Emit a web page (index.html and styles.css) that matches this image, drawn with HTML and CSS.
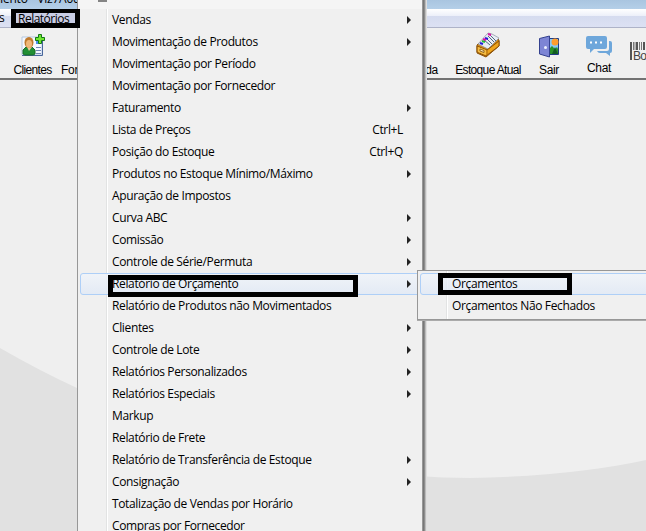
FILE: index.html
```html
<!DOCTYPE html>
<html lang="pt-BR">
<head>
    <meta charset="UTF-8">
    <meta name="viewport" content="width=device-width, initial-scale=1.0">
    <title>Relatórios</title>
    <link rel="stylesheet" href="styles.css">
</head>
<body>
    <div class="window">
        <div class="titlebar"><span>mento - Viz7A000</span></div>
        <nav class="menubar">
            <span class="menubar-prev">s</span>
            <span class="menubar-item">Relatórios</span>
        </nav>

        <div class="toolbar">
            <div class="tool clientes">
                <svg width="24" height="24" viewBox="0 0 24 24">
                    <path d="M1 3h20v18H1z" fill="#f4f8ff" stroke="#b5c7df"/>
                    <path d="M21.5 4v17.5H1" fill="none" stroke="#48669b"/>
                    <path d="M15 13.500h5M15 16.500h5M15 19.500h5" stroke="#7186b4"/>
                    <path d="M15 6h4v4h-4z" fill="#4b91ed"/>
                    <path d="M2 20v-4l3-3h6l3 3v4l-2 1H4z" fill="#218f34" stroke="#176a29"/>
                    <path d="M6 13l2 4 3-4z" fill="#eac69b"/>
                    <ellipse cx="8" cy="8.500" rx="4.500" ry="5.500" fill="#c17b2e"/>
                    <ellipse cx="8" cy="10" rx="3" ry="4" fill="#efb779"/>
                    <path d="M17.500 .5h3v3h3v3h-3v3h-3v-3h-3v-3h3z" fill="#70e52f" stroke="#127814"/>
                </svg>
                <span>Clientes</span>
            </div>
            <div class="tool fornecedores"><span>For</span></div>
            <div class="tool venda">
                <svg width="24" height="24" viewBox="0 0 24 24">
                    <circle cx="12" cy="12" r="9" fill="#8cab7a" stroke="#b6bbb3" stroke-width="2"/>
                </svg>
                <span>nda</span>
            </div>
            <div class="tool estoque">
                <svg width="24" height="26" viewBox="0 0 24 26">
                    <path d="M1 13L14 2l9 6v6L10 25 1 21z" fill="#d58b14" stroke="#8b520b"/>
                    <path d="M2 12l10-11 4 1 7 4-11 11z" fill="#e9edf4" stroke="#8791a0" stroke-width=".7"/>
                    <path d="M8 8l6 5M10 6l6 6M12 4l6 6M14 3l6 6" stroke="#506a82"/>
                    <path d="M4 11l3 1M9 6l3 1" stroke="#2119db" stroke-width="2"/>
                    <path d="M6 9l3 1" stroke="#22bd39" stroke-width="2"/>
                    <path d="M7 7l3 1M12 2l3 1" stroke="#dd15a5" stroke-width="2"/>
                    <path d="M1 14l10 4 12-9v5L10 24 1 20z" fill="#efa51d" stroke="#8b520b"/>
                    <path d="M2 15l8 3v5l-8-3z" fill="#f4bd45"/>
                    <path d="M11 18v6" stroke="#a86911"/>
                    <path d="M4 17l4 1.500v2L4 19z" fill="#fff0b9" stroke="#7c4c10" stroke-width=".8"/>
                </svg>
                <span>Estoque Atual</span>
            </div>
            <div class="tool sair">
                <svg width="22" height="24" viewBox="0 0 22 24">
                    <path d="M10.500 4.500h10v16h-10z" fill="#87c8f4" stroke="#203b83"/>
                    <circle cx="17" cy="8" r="3.500" fill="#ff9d2c"/>
                    <path d="M11 20v-5l3-3 3 3 2-2 1 2v5z" fill="#299127"/>
                    <path d="M14 20l3-7 3 7z" fill="#125c22"/>
                    <path d="M1.500 4.500l10-2.500v21l-10-3z" fill="#7d85d5" stroke="#34418f"/>
                    <circle cx="7.500" cy="13.500" r="1.500" fill="#eef1ff"/>
                </svg>
                <span>Sair</span>
            </div>
            <div class="tool chat">
                <svg width="28" height="22" viewBox="0 0 28 22">
                    <path d="M24 6h1q2 0 2 2v8q0 2-2 2v3l-4-3h-6q-2 0-3-2h10q2 0 2-2z" fill="#6ea7db"/>
                    <path d="M3 1h17q2 0 2 2v9q0 2-2 2H9l-4 4v-4H3q-2 0-2-2V3q0-2 2-2z" fill="#6ea7db"/>
                    <path d="M5 6.500h2v2H5zM10 6.500h2v2h-2zM15 6.500h2v2h-2z" fill="#fff"/>
                </svg>
                <span>Chat</span>
            </div>
            <div class="tool boleto">
                <svg width="16" height="18" viewBox="0 0 16 18">
                    <path d="M1 0v18M7 0v8M14 0v8" stroke="#555" stroke-width="2"/>
                    <path d="M3.500 0v8M5 0v8M9.500 0v8M11.500 0v8" stroke="#777"/>
                </svg>
                <span>Bo</span>
            </div>
        </div>

        <div class="workspace">
            <svg class="wave" width="646" height="451" viewBox="0 80 646 451">
                <path d="M0 348Q40 371 77 388C200 440 340 478 470 478C540 477 600 470 646 460V531H0Z" fill="#e1e1e1"/>
            </svg>
        </div>
    </div>

    <!-- Menu Relatórios -->
    <div class="menu main-menu">
        <div class="scroll-up"><i></i></div>
        <ul>
            <li class="sub">Vendas</li>
            <li class="sub">Movimentação de Produtos</li>
            <li>Movimentação por Período</li>
            <li>Movimentação por Fornecedor</li>
            <li class="sub">Faturamento</li>
            <li>Lista de Preços<kbd>Ctrl+L</kbd></li>
            <li>Posição do Estoque<kbd>Ctrl+Q</kbd></li>
            <li class="sub">Produtos no Estoque Mínimo/Máximo</li>
            <li>Apuração de Impostos</li>
            <li class="sub">Curva ABC</li>
            <li class="sub">Comissão</li>
            <li class="sub">Controle de Série/Permuta</li>
            <li class="sub active">Relatório de Orçamento</li>
            <li>Relatório de Produtos não Movimentados</li>
            <li class="sub">Clientes</li>
            <li class="sub">Controle de Lote</li>
            <li class="sub">Relatórios Personalizados</li>
            <li class="sub">Relatórios Especiais</li>
            <li>Markup</li>
            <li>Relatório de Frete</li>
            <li class="sub">Relatório de Transferência de Estoque</li>
            <li class="sub">Consignação</li>
            <li>Totalização de Vendas por Horário</li>
            <li>Compras por Fornecedor</li>
        </ul>
    </div>

    <!-- Submenu -->
    <div class="menu sub-menu">
        <ul>
            <li class="active">Orçamentos</li>
            <li>Orçamentos Não Fechados</li>
        </ul>
    </div>

    <!-- Marcações -->
    <div class="mark mark-menubar"></div>
    <div class="mark mark-item"></div>
    <div class="mark mark-subitem"></div>
</body>
</html>
```
FILE: styles.css
```css
* {
    box-sizing: border-box;
}

body {
    margin: 0;
    width: 646px;
    height: 531px;
    position: relative;
    overflow: hidden;
    background: #efefef;
    font-family: "Open Sans", "Noto Sans", sans-serif;
    font-size: 12px;
    color: #000;
}

.window {
    height: 531px;
    display: flex;
    flex-direction: column;
}

/* Barra de título */
.titlebar {
    height: 9px;
    overflow: hidden;
    background: linear-gradient(#a9c5e0, #b4cfe8);
    white-space: nowrap;
}

.titlebar span {
    display: block;
    margin: -9px 0 0 -8px;
    line-height: 16px;
    letter-spacing: -.2px;
}

/* Barra de menus */
.menubar {
    height: 19px;
    display: flex;
    align-items: center;
    background: linear-gradient(#fff 0, #eceff9 7px, #d5dbef 7px, #dce1f3 18px);
    border-bottom: 1px solid #aeb3c8;
    line-height: 18px;
}

.menubar-prev {
    width: 12px;
    margin-left: -1px;
}

.menubar-item {
    padding-left: 7px;
    width: 68px;
    height: 18px;
    line-height: 20px;
    background: #c9cde4;
    letter-spacing: -.5px;
}

/* Barra de ferramentas */
.toolbar {
    height: 52px;
    flex: none;
    display: flex;
    border-bottom: 2px solid #727272;
    background: #f0f0f0;
    font-family: "Liberation Sans", Arial, sans-serif;
    overflow: hidden;
}

.tool {
    flex: none;
    display: flex;
    flex-direction: column;
    justify-content: flex-end;
    align-items: center;
    padding-bottom: 1px;
    gap: 5px;
    line-height: 14px;
    letter-spacing: -.65px;
    white-space: nowrap;
}

.clientes {
    width: 57px;
    margin-left: 4px;
}

.fornecedores {
    width: 16px;
    align-items: flex-start;
    letter-spacing: -.3px;
}

.venda {
    margin-left: auto;
    width: 40px;
    padding-right: 8px;
    align-items: flex-end;
    letter-spacing: -.3px;
}

.venda svg {
    margin-right: 12px;
}

.estoque {
    width: 84px;
}

.sair {
    width: 38px;
    letter-spacing: -.3px;
}

.chat {
    width: 62px;
    padding-bottom: 3px;
    gap: 4px;
    letter-spacing: -.3px;
}

.boleto {
    width: 16px;
    align-items: flex-start;
    padding-bottom: 16px;
    gap: 0;
    color: #444;
}

.boleto span {
    margin: -10px 0 0 3px;
    font-size: 12px;
    line-height: 12px;
}

/* Área de trabalho */
.workspace {
    flex: 1;
}

.wave {
    display: block;
}

/* Menus */
.menu {
    position: absolute;
    background: linear-gradient(90deg, transparent 28px, #e2e3e3 28px, #e2e3e3 29px, #fff 29px, #fff 30px, transparent 30px) #f0f0f0;
    border: 1px solid #979797;
    letter-spacing: -.36px;
}

.menu ul {
    list-style: none;
    margin: 0;
    padding: 0 2px;
}

.menu li {
    height: 22px;
    line-height: 22px;
    padding: 0 16px 0 31px;
    display: flex;
    justify-content: space-between;
    align-items: center;
    white-space: nowrap;
    border: 1px solid transparent;
    border-radius: 3px;
}

.menu kbd {
    font: inherit;
}

.menu .sub {
    padding-right: 8px;
}

.menu .sub::after {
    content: "";
    border-left: 4px solid #222;
    border-top: 4px solid transparent;
    border-bottom: 4px solid transparent;
}

.menu .active {
    border-color: #aecff7;
    background: linear-gradient(rgba(240, 244, 250, .8), rgba(224, 233, 246, .8));
}

.main-menu {
    left: 77px;
    top: -1px;
    width: 346px;
    height: 540px;
    box-shadow: 1px 0 #777, 2px 0 #8d8d8d, 3px 0 #bbb, 4px 0 #dedede;
}

.scroll-up {
    height: 9px;
    background: #f5f5f5;
    padding-left: 20px;
}

.scroll-up i {
    display: block;
    width: 9px;
    height: 2px;
    background: #858585;
}

.sub-menu {
    left: 417px;
    top: 270px;
    width: 240px;
    height: 50px;
    padding-top: 2px;
    box-shadow: 0 1px #aaa;
}

/* Retângulos de destaque */
.mark {
    position: absolute;
    border: 5px solid #000;
}

.mark-menubar {
    left: 11px;
    top: 9px;
    width: 69px;
    height: 19px;
    border-top-width: 4px;
}

.mark-item {
    left: 108px;
    top: 275px;
    width: 250px;
    height: 22px;
}

.mark-subitem {
    left: 438px;
    top: 273px;
    width: 134px;
    height: 22px;
}
```
